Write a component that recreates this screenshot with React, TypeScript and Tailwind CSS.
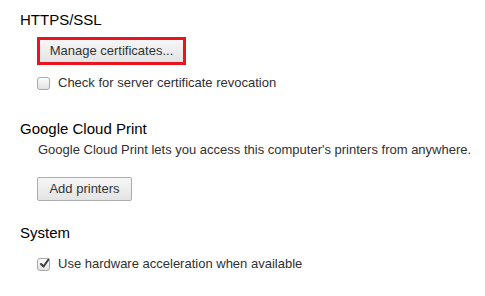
import React from "react";

const font = { fontFamily: '"Liberation Sans", "DejaVu Sans", sans-serif' };

function Box({ checked }: { checked?: boolean }) {
  return (
    <span className="relative flex h-[13px] w-[13px] shrink-0 items-center justify-center rounded-[3px] border border-[#a9a9a9] bg-gradient-to-b from-[#fcfcfc] to-[#e2e2e2] shadow-[inset_0_1px_0_#fff]">
      {checked && (
        <svg width="11" height="11" viewBox="0 0 11 11" className="absolute left-[1px] top-[-1px]">
          <path d="M2 6 L4.5 8.5 L9.5 1.5" fill="none" stroke="#3a3a3a" strokeWidth="2" strokeLinecap="round" strokeLinejoin="round" />
        </svg>
      )}
    </span>
  );
}

function Check({ label, checked }: { label: string; checked?: boolean }) {
  return (
    <div className="flex h-5 items-center gap-[8px] whitespace-nowrap text-[13px] text-[#303030]">
      <Box checked={checked} />
      <span>{label}</span>
    </div>
  );
}

function Btn({ children, className = "" }: { children: React.ReactNode; className?: string }) {
  return (
    <button className={"flex items-center justify-center whitespace-nowrap rounded-[2px] border border-[#adadad] bg-gradient-to-b from-[#f6f6f6] to-[#e4e4e4] text-[13px] text-[#333] " + className}>
      {children}
    </button>
  );
}

export default function App() {
  return (
    <div className="h-[296px] w-[485px] bg-white pl-[20px] pt-[10px] antialiased" style={font}>
      <h3 className="h-5 text-[15px] leading-5 text-black">HTTPS/SSL</h3>
      <div className="pl-[17px]">
        <div className="mt-[7px] w-[149px] border-[3px] border-[#e8141f]">
          <Btn className="h-[22px] w-full border-0">Manage certificates...</Btn>
        </div>
        <div className="mt-[8px]">
          <Check label="Check for server certificate revocation" />
        </div>
      </div>

      <h3 className="mt-[26px] h-5 text-[15px] leading-5 text-black">Google Cloud Print</h3>
      <div className="pl-[18px]">
        <p className="mt-[2px] h-[18px] whitespace-nowrap text-[13px] leading-[18px] text-[#303030]">
          Google Cloud Print lets you access this computer's printers from anywhere.
        </p>
      </div>
      <div className="pl-[17px]">
        <Btn className="mt-[18px] h-6 w-[95px]">Add printers</Btn>
      </div>

      <h3 className="mt-[22px] h-5 text-[15px] leading-5 text-black">System</h3>
      <div className="mt-[11px] pl-[17px]">
        <Check label="Use hardware acceleration when available" checked />
      </div>
    </div>
  );
}
